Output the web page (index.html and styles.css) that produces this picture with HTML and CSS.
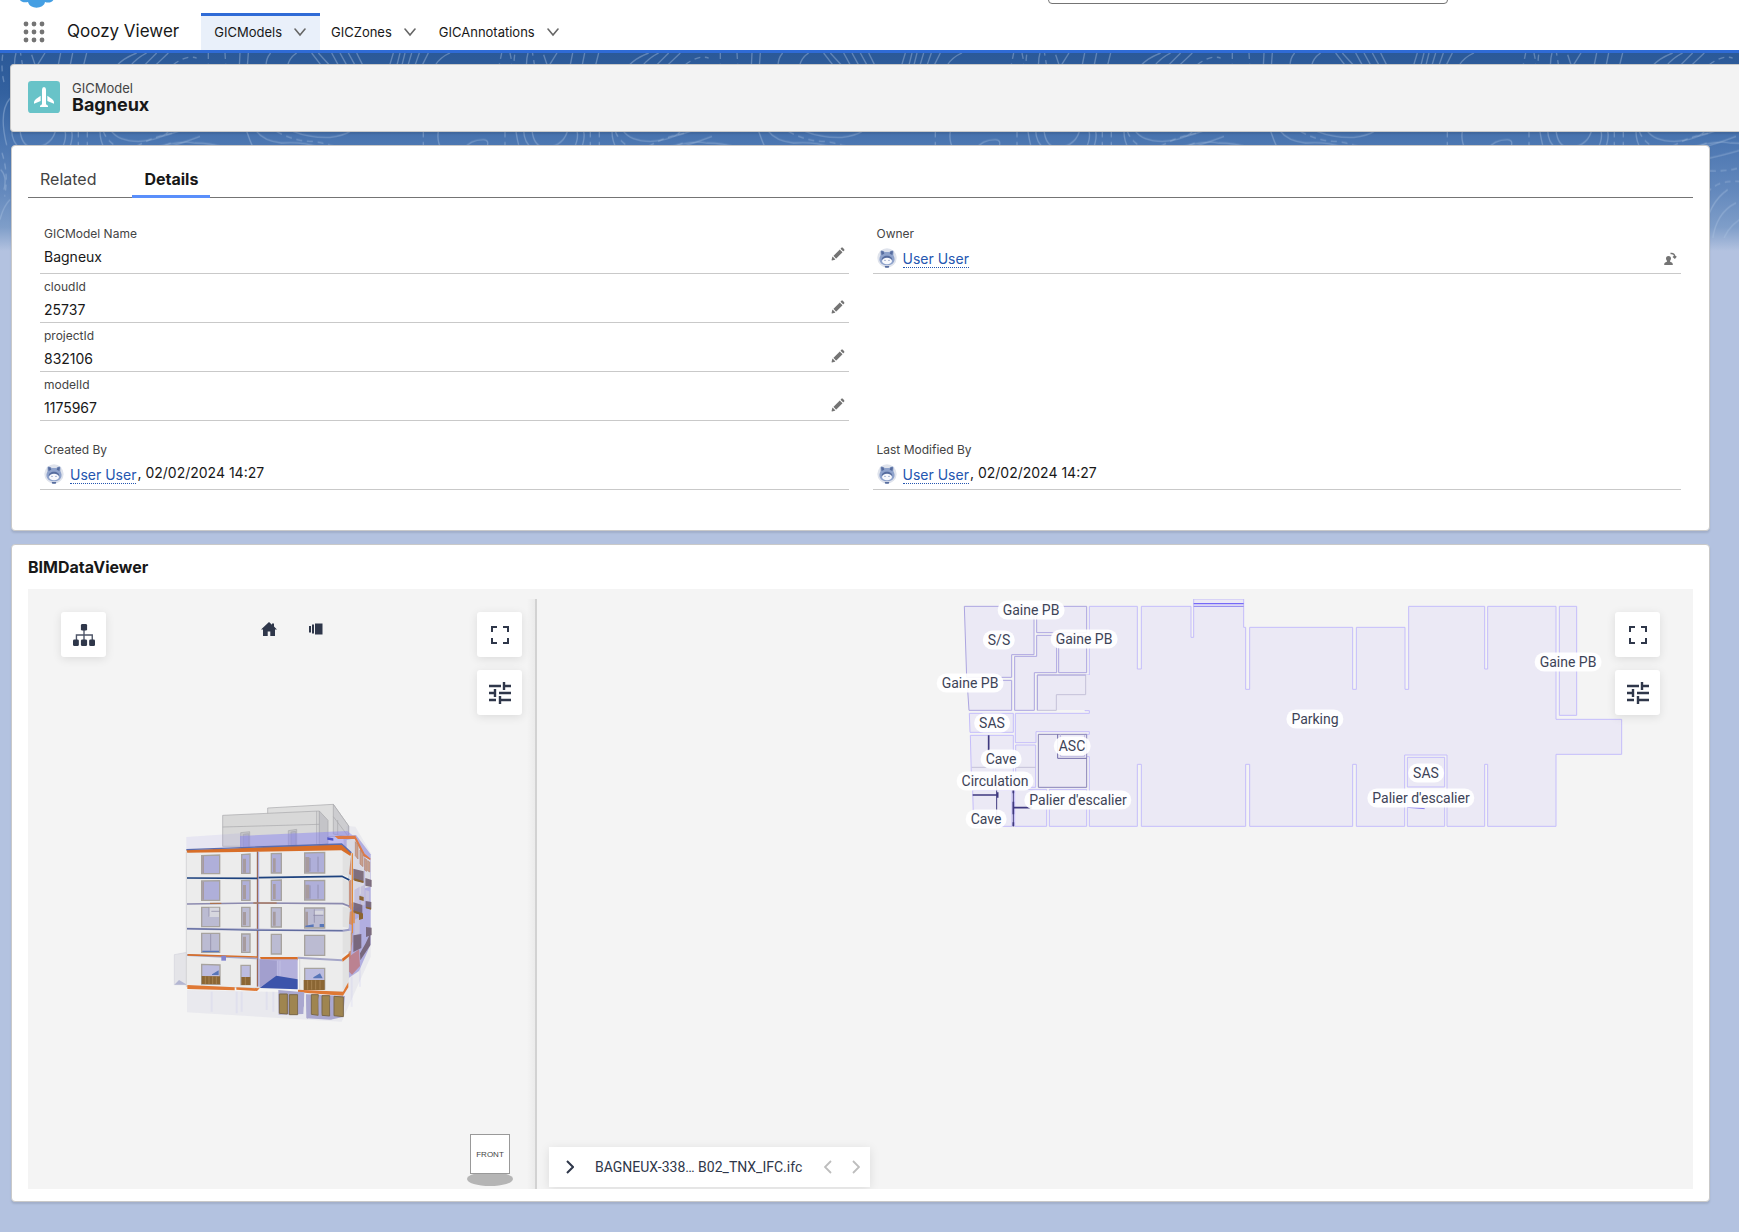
FILE: index.html
```html
<!DOCTYPE html>
<html lang="en">
<head>
<meta charset="utf-8">
<meta name="viewport" content="width=device-width, initial-scale=1">
<title>Bagneux | GICModel</title>
<link rel="stylesheet" href="styles.css">
</head>
<body>
<svg class="sprite" aria-hidden="true">
  <symbol id="edit" viewBox="0 0 52 52"><path fill="currentColor" d="M9.500 33.400l8.900 8.900c.4.4 1 .4 1.400 0L42 20c.4-.4.4-1 0-1.400l-8.800-8.800c-.4-.4-1-.4-1.400 0L9.500 32.100c-.4.4-.4 1 0 1.300zM36.100 5.700c-.4.4-.4 1 0 1.400l8.800 8.800c.4.4 1 .4 1.400 0l2.500-2.500c1.600-1.500 1.600-3.900 0-5.500l-4.700-4.700c-1.600-1.600-4.100-1.600-5.700 0l-2.300 2.500zM2.100 48.200c-.2 1 .7 1.900 1.700 1.700l10.900-2.600c.4-.1.7-.3.9-.5l.2-.2c.2-.2.3-.9-.1-1.300l-9-9c-.4-.4-1.100-.3-1.300-.1l-.2.2c-.3.3-.4.6-.5.9L2.100 48.200z"/></symbol>
  <symbol id="chevron" viewBox="0 0 12 12"><path fill="none" stroke="currentColor" stroke-width="1.600" stroke-linecap="round" d="M1 3l5 6 5-6"/></symbol>
  <symbol id="avatar" viewBox="0 0 60 60">
    <circle cx="30" cy="30" r="29" fill="#dfe3ec"/>
    <path fill="#8ea2cb" d="M11 8c5-2 9 1 12 4h14c3-3 7-6 12-4 1 6 0 10 0 13 4 8 5 14 2 20-4 8-12 11-21 11S13 49 9 41c-3-6-2-12 2-20 0-3-1-8 0-13z"/>
    <path fill="#566c9e" d="M12 10h7l3 7-8 4zM48 10h-7l-3 7 8 4zM14 36c0-8 7-13 16-13s16 5 16 13l-5 3H19z"/>
    <ellipse cx="30" cy="39" rx="15" ry="10" fill="#f7f8fc"/>
    <circle cx="24" cy="37" r="2" fill="#7488b5"/><circle cx="36" cy="37" r="2" fill="#7488b5"/>
    <path fill="#566c9e" d="M23 54h14l-2 5H25z"/>
  </symbol>
  <symbol id="expand" viewBox="0 0 18 18"><path fill="none" stroke="currentColor" stroke-width="2" d="M1 6V1h5M12 1h5v5M17 12v5h-5M6 17H1v-5"/></symbol>
  <symbol id="tune" viewBox="0 0 22 22"><path fill="none" stroke="currentColor" stroke-width="2.400" d="M0 4h12M16 4h6M15 0v8M0 11h6M10 11h12M6 7v8M0 18h7M11 18h11M11 14v8"/></symbol>
</svg>

<header class="app-header">
  <div class="global-bar">
    <svg class="cloud" width="36" height="26" viewBox="0 0 36 26" aria-hidden="true"><path fill="#459fe3" d="M18 0a9 9 0 0 1 9 3 9 9 0 0 1 8 14c-2 4-6 4-9 3-1 7-15 8-17 0-4 1-8 0-9-4V8a8 8 0 0 1 9-5c3-2 5-3 9-3z"/></svg>
    <input class="search" type="text" aria-label="Search">
  </div>
  <nav class="nav">
    <button class="launcher" aria-label="App Launcher">
      <svg width="22" height="22" viewBox="0 0 22 22" fill="#747474"><circle cx="3" cy="3" r="2.400"/><circle cx="11" cy="3" r="2.400"/><circle cx="19" cy="3" r="2.400"/><circle cx="3" cy="11" r="2.400"/><circle cx="11" cy="11" r="2.400"/><circle cx="19" cy="11" r="2.400"/><circle cx="3" cy="19" r="2.400"/><circle cx="11" cy="19" r="2.400"/><circle cx="19" cy="19" r="2.400"/></svg>
    </button>
    <span class="app-name">Qoozy Viewer</span>
    <div class="nav-item active"><a href="#">GICModels</a><button aria-label="GICModels list"><svg><use href="#chevron"/></svg></button></div>
    <div class="nav-item"><a href="#">GICZones</a><button aria-label="GICZones list"><svg><use href="#chevron"/></svg></button></div>
    <div class="nav-item"><a href="#">GICAnnotations</a><button aria-label="GICAnnotations list"><svg><use href="#chevron"/></svg></button></div>
  </nav>
</header>

<div class="stage">
  <svg class="backdrop" aria-hidden="true">
    <defs>
      <linearGradient id="sky" x1="0" y1="0" x2="0" y2="1">
        <stop offset="0" stop-color="#2b5998"/><stop offset=".2" stop-color="#33619f"/><stop offset=".45" stop-color="#4b76b1"/><stop offset=".7" stop-color="#6489bd"/><stop offset=".88" stop-color="#7f9ec9"/><stop offset="1" stop-color="#b3c2e0"/>
      </linearGradient>
      <pattern id="topo" width="1536" height="640" patternUnits="userSpaceOnUse" patternTransform="scale(.33333)">
        <g fill="none" stroke="#a9c0e0" stroke-opacity=".42" stroke-width="4">
          <path d="M48 0q-6 20-4 45M95 5l10 30 28 5M135 0l-25 40M182 0l-8 40M218 0l-8 40M260 0l-10 40M410 0q-40 15-62 40M440 0q-30 15-50 40M470 0l-40 40M505 0l-42 40M720 0l-2 40M745 0l-3 40M812 0q-14 15-14 40M890 0q-22 14-28 40M935 0l28 36M955 0l35 38M995 0l22 40M1020 0l22 40M1045 0l22 40M1070 0l20 40M1180 0l-12 40M1200 0l-10 40M1215 0l-10 40M1235 0l-12 40M1258 0l-14 40M1285 0l-20 40M1350 0q-28 12-44 36"/>
          <path d="M60 -10l8 50M520 35q40-30 70-20M625 0v45M675 0l3 45M8 5q-6 50 6 90M1505 0l-8 40M1530 0l8 40" stroke-dasharray="18 14"/>
          <path d="M30 136q-35 40-10 140M60 230q4 50 40 56 60-10 68-60M35 230q0 40 30 60M195 235q6 20-10 55M215 235q5 20-8 55M300 235q0 30 15 55M335 235q20 28 80 30 70-5 90-30M365 290q40-5 80 0 90-30 140-20 50 0 90 15M740 235q10 30 22 55M770 235q20 28 75 35 60-5 110 12M880 235q50 20 110 18 40-5 60-18M1315 235q-5 30 10 55M1390 290q20-30 60-30 20 0 10 25"/>
          <path d="M235 235v50M262 235v50M310 235q10 30 50 52M410 280q50-30 110-40M830 235q50 30 110 30 60 10 80 25M1270 235v50M1515 235v50" stroke-dasharray="18 14"/>
          <path d="M512 270q-60 20-120 60M1536 285q-60 5-110 35M512 400M2 350q20 20 10 60M30 440q-20 20-30 60M485 250q40-8 110-40M490 285q50-12 110-35M500 320q50-10 120-30M505 540q12-90 70-130M530 560q10-80 70-110M560 570q8-40 50-70"/>
          <path d="M490 350q60 10 120-5M500 450q20-70 110-65M6 300q20 60 8 130" stroke-dasharray="18 14"/>
        </g>
      </pattern>
    </defs>
    <rect width="100%" height="100%" fill="url(#sky)"/>
    <rect width="100%" height="185" fill="url(#topo)"/>
  </svg>

  <section class="record-header">
    <svg class="record-icon" width="32" height="32" viewBox="0 0 96 96" aria-hidden="true"><rect width="96" height="96" rx="10" fill="#68c3c8"/><path fill="#fff" d="M42 26q0-8 6-8t6 8v44l6 4v4H36v-4l6-4zM38 44v16l-20 8v-5q1-5 6-9zM58 44v16l20 8v-5q-1-5-6-9z"/></svg>
    <div>
      <p class="record-type">GICModel</p>
      <h1 class="record-name">Bagneux</h1>
    </div>
  </section>

  <main class="main">
    <section class="card details">
      <div class="tabs" role="tablist">
        <button class="tab" role="tab" aria-selected="false">Related</button>
        <button class="tab selected" role="tab" aria-selected="true">Details</button>
      </div>
      <div class="columns">
        <dl class="column">
          <div class="field tall"><dt>GICModel Name</dt><dd>Bagneux<button class="edit" aria-label="Edit GICModel Name"><svg><use href="#edit"/></svg></button></dd></div>
          <div class="field"><dt>cloudId</dt><dd>25737<button class="edit" aria-label="Edit cloudId"><svg><use href="#edit"/></svg></button></dd></div>
          <div class="field"><dt>projectId</dt><dd>832106<button class="edit" aria-label="Edit projectId"><svg><use href="#edit"/></svg></button></dd></div>
          <div class="field"><dt>modelId</dt><dd>1175967<button class="edit" aria-label="Edit modelId"><svg><use href="#edit"/></svg></button></dd></div>
        </dl>
        <dl class="column">
          <div class="field tall"><dt>Owner</dt><dd><svg class="avatar"><use href="#avatar"/></svg><a class="user" href="#">User User</a><button class="change-owner" aria-label="Change Owner"><svg width="14" height="14" viewBox="0 0 14 14"><path fill="currentColor" d="M5.500 4c1.800 0 2.500 1.200 2.500 2.500 0 .9-.4 1.700-.9 2.200v1c1.900.5 2.700 1.100 2.700 2.800v.500H1.200V12.500c0-1.700.8-2.300 2.700-2.800v-1C3.400 8.200 3 7.400 3 6.500 3 5.200 3.700 4 5.500 4z"/><path fill="none" stroke="currentColor" stroke-width="1.500" d="M7.500 1.500c3-.5 4.300 1 4.300 4M10 4.500L11.800 6l1.400-1.800"/></svg></button></dd></div>
        </dl>
        <dl class="column">
          <div class="field tall"><dt>Created By</dt><dd><svg class="avatar"><use href="#avatar"/></svg><a class="user" href="#">User User</a><span class="stamp">, 02/02/2024 14:27</span></dd></div>
        </dl>
        <dl class="column">
          <div class="field tall"><dt>Last Modified By</dt><dd><svg class="avatar"><use href="#avatar"/></svg><a class="user" href="#">User User</a><span class="stamp">, 02/02/2024 14:27</span></dd></div>
        </dl>
      </div>
    </section>

    <section class="card viewer-card">
      <h2 class="viewer-title">BIMDataViewer</h2>
      <div class="viewer">
        <div class="pane model-pane">
          <div class="toolbar">
            <button class="tool" aria-label="Structure"><svg width="22" height="22" viewBox="0 0 64 64"><path fill="none" stroke="#4d5467" stroke-width="4" d="M32 14v34M10 50V32h46v18"/><g fill="#2f374a"><rect x="23" y="0" width="18" height="19" rx="4"/><rect x="0" y="45" width="17" height="19" rx="4"/><rect x="23" y="45" width="18" height="19" rx="4"/><rect x="47" y="45" width="17" height="19" rx="4"/></g></svg></button>
            <div class="view-actions">
              <button class="bare" aria-label="Home view"><svg width="16" height="14" viewBox="0 0 16 14"><path fill="#2f374a" d="M8 0l3 2.700V1.600h2v2.900L16 7.400h-2V14H9.300V9.500H6.700V14H2V7.400H0z"/></svg></button>
              <button class="bare" aria-label="Projection"><svg width="14" height="12" viewBox="0 0 14 12" fill="#2f374a"><path d="M6 .5h7.500v11H6zM3 1.500h2v9H3zM0 3h2v6.500H0z"/></svg></button>
            </div>
            <div class="tool-stack">
              <button class="tool" aria-label="Full screen"><svg width="18" height="18"><use href="#expand"/></svg></button>
              <button class="tool" aria-label="Settings"><svg width="22" height="22"><use href="#tune"/></svg></button>
            </div>
          </div>
          <svg class="building" width="230" height="240" viewBox="0 0 690 720" role="img" aria-label="3D model">
            <g stroke="#a8a8aa" stroke-width="2">
              <path fill="#dedede" d="M323 54L520 43 566 108V140H323z"/><path fill="#cdcdd0" d="M520 43l46 65v34l-46-10z"/>
              <path fill="#d8d8d8" d="M188 76L478 63v106H188z"/><path fill="#c4c4c8" d="M478 63l26 28v70l-26 6z"/>
              <path fill="none" d="M188 111l290-8M520 80l44 58M533 90v45M470 63v100"/>
              <path fill="#c3c3c9" d="M242 128l27-3v48h-27zM385 122l25-4v50h-25z"/><path fill="#b4b4c6" d="M250 133l16-2v42h-16zM393 126l14-2v42h-14z"/>
            </g>
            <path fill="#8a86e8" fill-opacity=".12" d="M79 141L242 130V172L79 180z"/>
            <path fill="#9c9ac8" fill-opacity=".12" d="M560 108l26 2 46 78V500L545 695 81 667V600L550 610z"/>
            <path fill="#8a86f0" fill-opacity=".5" d="M240 138l322-15 22 18-10 50-30-28-304 10z"/>
            <path fill="#d8d8df" fill-opacity=".6" stroke="#d3d3dc" stroke-width="2" d="M43 494l38-7v97H43z"/><path fill="#b3b6d2" d="M43 584l14-14 24 14z"/>
            <path fill="#b1aee0" d="M550 138l38-3 44 58v270l-35 80-30 20z"/>
            <path fill="#dadae4" d="M560 150l26-5 26 56v92l-30 60-22-40zM614 200l17 10v80l-17 5z"/>
            <path fill="#c6c2dc" d="M583 300l16-10v60l-16 8zM602 290l12-6v60l-12 6zM583 390l16-10v50l-16 8zM616 300l12 4v30h-12z"/>
            <path fill="#de7a45" d="M524 138l62-1 28 54 18 15-2 4-20-12-26-51h-50z"/>
            <g fill="#c98f7c"><path d="M557 190l16-2v68l-13-8zM560 275l14-6v88l-14 8zM565 367l12-4v42l-12-4zM560 490l16-35-4 52-12 3z"/></g>
            <path stroke="#e08a3c" stroke-width="4" d="M577 190v240M582 360v40"/>
            <g fill="#c9a08e" stroke="#b28574" stroke-width="2"><path d="M586 155l8 10v42l-8-10zM600 180l9 12v38l-9-8zM614 205l6 4v35l-6-4zM623 212l6 4v30l-6-4zM562 440l14-12v28l-14 30z"/></g>
            <path fill="#bd7a82" fill-opacity=".85" d="M567 500l30-22 3 50-24 26-10-10z"/>
            <g fill="#6e5c6c" fill-opacity=".85"><path d="M580 236l31 8v34l-31-8zM616 264l19 6v21l-19-4zM580 337l27 8v30l-27-8zM617 333l17 3v22l-17-4zM580 436l24-4v42l-24 12zM618 411l17 2v22l-17 6zM600 490l17-30 14-30v36l-30 45z"/></g>
            <g fill="#8b642f"><path d="M583 265l27 8v6l-27-7zM583 362l22 6v8l-22-7zM598 317l13 4v12l-13-4zM597 372l12-2v16l-12 4zM618 350l15 3v6l-15-4z"/></g>
            <path fill="#4f56c8" d="M502 142l18 3v7l-18-3z"/>
            <path fill="#ececec" stroke="#c9c9cc" stroke-width="2" d="M79 186l213-10 256-8 18 22v370l-14 46-133-3V506H299v88l-220-4z"/>
            <path fill="#e1e1e1" d="M548 175l26 15-8 68-18-4zM548 265l18 12v70l-18-4zM548 350l22 4-4 60-18-4zM548 424l24-2v60l-24 12zM548 512l18-15v80l-18 25z"/>
            <path fill="#d86e28" d="M79 180L292 172 545 163l29 26-3 9-27-17-252 4-210 3z"/>
            <path fill="none" stroke="#5a6caf" stroke-width="4" d="M79 179L292 171 545 162l29 26"/>
            <path stroke="#8c4f36" stroke-width="3" d="M292 185v405"/>
            <path stroke="#a3a5dd" stroke-width="3" d="M296 185v405"/>
            <g fill="none"><path stroke="#1d427e" stroke-width="5" d="M81 264l211 1M296 263l250-4 22 11"/>
            <path stroke="#8c8aaf" stroke-width="5" d="M81 342l211-3 256 2 20 8"/><path stroke="#b06d3a" stroke-width="3" d="M150 340h34M280 339h70"/>
            <path stroke="#9a9cc4" stroke-width="6" d="M81 416l211 3 256 3 20-3"/><path stroke="#40518a" stroke-width="2" d="M81 416l211 5 256 1"/>
            <path stroke="#a5a6c8" stroke-width="6" d="M81 495l211 10M413 503l133 8"/></g>
            <path fill="#d86e28" d="M83 492l210 7v4l-210-6zM300 501h113v10l-110-2zM546 506l23-18v10l-21 17z"/>
            <g fill="#afafd9" stroke="#a7a39e" stroke-width="4">
              <path d="M125 197l54-2v56h-54zM245 194l25-2v58h-25zM334 191l30-1v59h-30zM434 189l60-2v62h-60zM125 273l54-1v59h-54zM245 272l25-1v60h-25zM334 271l30-1v61h-30zM434 272l60-1v59h-60z"/>
              <path fill="#bbbbd2" d="M125 352h54v58h-54zM245 352h25v58h-25zM334 353h30v58h-30zM434 354h60v60h-60zM125 430h54v57h-54zM245 432h25v55h-25zM334 433h30v59h-30zM434 436h60v60h-60z"/>
              <path fill="#bcbcdf" d="M125 523l55 2v58l-55-1zM243 526h28v58h-28zM434 535h60v62h-60z"/>
            </g>
            <g fill="#a79b9e"><path d="M127 199l5-2v52h-5zM249 206h9v42h-9zM339 205h8v42h-8zM436 201h12v45h-12zM249 285h9v42h-9zM339 282h8v45h-8zM436 284h12v42h-12zM249 366h9v40h-9zM339 365h8v42h-8zM249 440h9v44h-9zM436 365h8v45h-8zM127 275h5v54h-5z"/></g>
            <path fill="#5876b8" d="M156 553l20-12v14h-20zM460 562l20-12 8 15h-28zM436 407l25-4v8h-25zM479 402h13v9h-13zM127 482h50v4h-50z"/>
            <path fill="#d7d7df" d="M147 353h30v28h-30zM463 362h27v12h-27z"/><path fill="none" stroke="#8683a0" stroke-width="2" d="M147 353v27M154 364h25M463 358v40M450 204v40M474 200v45M450 286v40M474 284v42M152 432v50M460 376h30"/>
            <path fill="#8284cf" d="M184 497h14v15h-14z"/>
            <path fill="#b4b1dc" d="M299 508h114v60l-114 24z"/><path fill="#a29fce" d="M299 508l53 4v48l-53 32z"/><path fill="none" stroke="#c7c5e8" stroke-width="2" d="M352 512v46M360 512v46"/>
            <path fill="#3c54ab" d="M299 594l50-37 64 11v30z"/>
            <g fill="#8b6634"><path d="M125 558l55 1v24l-55-1zM244 561h27v24h-27zM431 570h63v30h-63z"/></g>
            <path stroke="#b58f5d" stroke-width="2" d="M136 559v23M147 559v23M158 559v23M169 559v23M256 561v24M443 571v28M455 571v28M467 571v28M480 571v28"/>
            <path fill="#df7834" d="M82 585l142 7v9l-142-4zM229 592l70 3-8 8-62-4zM414 599l135 6 16-28v15l-16 25-135-10z"/>
            <path fill="#aaa8cf" d="M355 600l78 7-3 65-74 2zM438 613l117 5-6 63-38 8-72-4z"/>
            <g fill="#9f8550" stroke="#7b6849" stroke-width="3"><path d="M358 612h24v60l-24-2zM388 614h25v60h-25zM454 614h21v62l-21-3zM486 617h23v61l-23-2zM522 619l28 2v59l-28-3z"/></g>
            <path fill="#aaa7cf" d="M415 614l17 14v20l-17 24zM439 612l10 62-8 14zM475 614l9 60-8 12zM509 618l10 58-6 14z"/>
            <g fill="none" stroke="#9591e8" stroke-opacity=".1" stroke-width="6"><path d="M155 605v60M230 605v65M245 605v60M320 605v55M340 605v60M575 560v90M600 530v60"/></g>
          </svg>
          <svg class="nav-cube" width="46" height="54" viewBox="0 0 46 54" role="img" aria-label="Front view"><ellipse cx="23" cy="46" rx="23" ry="7" fill="#b5b5b5"/><rect x="3.500" y="1.500" width="39" height="39" fill="#fff" stroke="#999"/><text x="23" y="24" class="cube-text">FRONT</text></svg>
        </div>
        <div class="divider"></div>
        <div class="pane plan-pane">
          <div class="plan">
            <svg width="710" height="236" viewBox="0 12 2130 708" role="img" aria-label="Floor plan">
              <g fill="#ebe9f5" stroke="#c5bdfa" stroke-width="3">
                <path d="M478 34H622V222H634V34H783V127H791V12H941V97H947V283H959V97H1268V283H1279V97H1425V283H1436V34H1664V222H1673V34H1878V373H2075V478H1878V694H1673V508H1664V694H1551V480H1424V694H1279V508H1268V694H959V508H947V694H634V508H622V694H478V485H465V418H478V410H318V443H256V355H478V347H465V240H478z"/>
                <path d="M1432 487H1544V576H1432zM1432 585H1544V694H1432zM1888 34H1940V361H1888zM118 355H250V412H120zM121 421H250V575H125zM257 450H317V577H257zM128 585H246V694H131zM254 583H350V694H254zM358 583H470V694H358z"/>
              </g>
              <path fill="#ebe9f5" d="M322 240h158v105H322zM462 420h18v62h-18z"/>
              <g fill="#ebe9f5" stroke="#aca5e0" stroke-width="3">
                <path d="M103 34H312V179H245V247H110zM111 256H245V346H117zM254 184H320V121H380V233H313V346H254zM320 34H470V113H320zM386 121H470V233H386z"/>
                <path stroke="#c4c1d8" d="M467 240V299H379V346H322V240z"/><path fill="none" d="M322 346V240H467"/>
                <path stroke="#8984b8" d="M325 418H470V577H325z"/>
              </g>
              <path fill="none" stroke="#6f69a6" stroke-width="3" d="M383 418V490H470"/>
              <path fill="none" stroke="#bdb8e0" stroke-width="3" d="M391 418V484H464V420"/>
              <path stroke="#c4c1d8" stroke-width="3" d="M125 517H317"/>
              <g fill="none" stroke="#3f397f" stroke-width="5"><path d="M128 600H204M203 592V608M250 638H305M176 421V468"/><path stroke-width="3" d="M200 575V694M250 585V694"/><path d="M250 585V595M250 620V658M250 682V694"/></g>
              <path stroke="#8a80ee" stroke-width="3" d="M791 34H941M1432 637L1484 641"/><path stroke="#7669f8" stroke-width="4" d="M791 26H941"/>
            </svg>
            <span class="room" style="left:101px;top:11px">Gaine PB</span>
            <span class="room" style="left:69px;top:41px">S/S</span>
            <span class="room" style="left:154px;top:40px">Gaine PB</span>
            <span class="room" style="left:40px;top:84px">Gaine PB</span>
            <span class="room" style="left:62px;top:124px">SAS</span>
            <span class="room" style="left:142px;top:147px">ASC</span>
            <span class="room" style="left:71px;top:160px">Cave</span>
            <span class="room" style="left:65px;top:182px">Circulation</span>
            <span class="room" style="left:148px;top:201px">Palier d'escalier</span>
            <span class="room" style="left:56px;top:220px">Cave</span>
            <span class="room" style="left:385px;top:120px">Parking</span>
            <span class="room" style="left:496px;top:174px">SAS</span>
            <span class="room" style="left:491px;top:199px">Palier d'escalier</span>
            <span class="room" style="left:638px;top:63px">Gaine PB</span>
          </div>
          <div class="toolbar">
            <div class="tool-stack">
              <button class="tool" aria-label="Full screen"><svg width="18" height="18"><use href="#expand"/></svg></button>
              <button class="tool" aria-label="Settings"><svg width="22" height="22"><use href="#tune"/></svg></button>
            </div>
          </div>
          <div class="file-bar">
            <button class="bare" aria-label="Open list"><svg width="8" height="14" viewBox="0 0 8 14"><path fill="none" stroke="#2f374a" stroke-width="2" d="M1 1l6 6-6 6"/></svg></button>
            <span class="file-name">BAGNEUX-338… B02_TNX_IFC.ifc</span>
            <button class="bare" aria-label="Previous" disabled><svg width="8" height="14" viewBox="0 0 8 14"><path fill="none" stroke="#bdbdbd" stroke-width="1.800" d="M7 1L1 7l6 6"/></svg></button>
            <button class="bare" aria-label="Next" disabled><svg width="8" height="14" viewBox="0 0 8 14"><path fill="none" stroke="#bdbdbd" stroke-width="1.800" d="M1 1l6 6-6 6"/></svg></button>
          </div>
        </div>
      </div>
    </section>
  </main>
</div>
</body>
</html>
```
FILE: styles.css
```css
* { box-sizing: border-box; }
body, h1, h2, p, dl, dd { margin: 0; }
body {
  min-height: 100vh;
  background: #b3c2e0;
  color: #181818;
  font: 13px/20px Inter, "Liberation Sans", sans-serif;
}
button { margin: 0; padding: 0; border: 0; background: none; color: inherit; font: inherit; cursor: pointer; }
a { color: inherit; text-decoration: none; }
svg { display: block; flex: none; }
.sprite { position: absolute; width: 0; height: 0; }

/* Application header */
.app-header { background: #fff; border-bottom: 3px solid #2f6bd6; }
.global-bar { display: flex; justify-content: space-between; height: 13px; padding: 0 291px 0 19px; overflow: hidden; }
.cloud { margin-top: -18px; }
.search { width: 400px; height: 34px; margin-top: -30px; border: 1px solid #747474; border-radius: 4px; background: #fff; }
.nav { display: flex; align-items: stretch; height: 37px; padding-left: 23px; }
.launcher { display: flex; align-items: center; }
.app-name { margin: 0 22px; font-size: 17px; line-height: 36px; }
.nav-item { display: flex; align-items: center; gap: 12px; padding: 0 12px 0 11px; line-height: 36px; }
.nav-item.active { padding: 0 14px 0 13px; background: #e9f0fa; box-shadow: inset 0 3px #2f6bd6; }
.nav-item svg { width: 12px; height: 12px; color: #666; }

/* Page area */
.stage { position: relative; padding-top: 11px; }
.backdrop { position: absolute; top: 0; left: 0; width: 100%; height: 198px; }
.record-header {
  position: relative;
  display: flex;
  align-items: flex-start;
  gap: 12px;
  height: 68px;
  margin-left: 10px;
  padding: 16px 17px;
  border: 1px solid #c9c9c9;
  border-right: 0;
  border-radius: 4px 0 0 4px;
  background: #f3f3f3;
  box-shadow: 0 2px 2px rgba(0, 0, 0, .1);
}
.record-type { color: #444; line-height: 14px; }
.record-name { font-size: 18px; font-weight: 700; line-height: 20px; }
.main { position: relative; display: grid; gap: 13px; padding: 13px 29px 30px 11px; }
.card { padding: 0 16px; border: 1px solid #c9c9c9; border-radius: 4px; background: #fff; box-shadow: 0 2px 2px rgba(0, 0, 0, .1); }

/* Record details */
.details { padding-top: 14px; padding-bottom: 40px; }
.tabs { display: flex; gap: 24px; border-bottom: 1px solid #747474; }
.tab { height: 38px; margin-bottom: -1px; padding: 0 12px; color: #444; font-size: 16px; }
.tab.selected { color: #181818; font-weight: 700; box-shadow: inset 0 -3px #5a8ffb; }
.columns { display: grid; grid-template-columns: 1fr 1fr; gap: 16px 24px; padding: 23px 12px 0; }
.field { height: 49px; padding: 3px 4px 0; border-bottom: 1px solid #c9c9c9; }
.field.tall { height: 53px; }
.field dt { color: #444; font-size: 12px; }
.field dd { display: flex; align-items: center; height: 25px; font-size: 14px; }
.edit { margin-left: auto; }
.edit svg { width: 14px; height: 14px; margin-bottom: 5px; color: #747474; }
.change-owner { margin: 4px 0 0 auto; color: #747474; }
.avatar { width: 20px; height: 20px; margin: 2px 6px 0 0; }
.user { color: #2456b0; line-height: 17px; border-bottom: 1px dotted #2456b0; margin-top: 5px; }
.stamp { margin-left: 1px; }

/* BIM viewer */
.viewer-card { padding-bottom: 12px; }
.viewer-title { font-size: 16px; font-weight: 700; line-height: 44px; }
.viewer { display: grid; grid-template-columns: minmax(0, 507fr) 2px minmax(0, 1156fr); height: 600px; padding-top: 10px; background: #f4f4f4; }
.pane { position: relative; overflow: hidden; }
.model-pane { background: linear-gradient(to left, #ebebeb, #f4f4f4 8px); }
.divider { background: #d2d2d2; }
.toolbar { position: relative; display: flex; justify-content: space-between; align-items: flex-start; padding: 13px 13px 0 33px; }
.plan-pane .toolbar { justify-content: flex-end; padding-right: 33px; }
.tool-stack { display: grid; gap: 13px; }
.tool { display: grid; place-items: center; width: 45px; height: 45px; border-radius: 3px; background: #fff; color: #2f374a; box-shadow: 0 2px 10px rgba(0, 0, 0, .1); }
.view-actions { display: flex; align-items: center; gap: 32px; height: 33px; }
.building { position: absolute; top: 191px; left: 132px; }
.nav-cube { position: absolute; right: 22px; bottom: 2px; }
.cube-text { font: 8px "Liberation Sans", sans-serif; text-anchor: middle; fill: #444; }
.plan { position: absolute; top: 0; right: 53px; width: 710px; height: 236px; }
.room {
  position: absolute;
  transform: translate(-50%, -50%);
  padding: 0 5px;
  border-radius: 10px;
  background: rgba(255, 255, 255, .92);
  color: #3d4357;
  font: 14px/19px Roboto, "Liberation Sans", sans-serif;
  white-space: nowrap;
}
.file-bar {
  position: absolute;
  left: 12px;
  bottom: 2px;
  display: flex;
  align-items: center;
  height: 40px;
  padding: 0 10px 0 17px;
  background: #fff;
  box-shadow: 0 2px 10px rgba(0, 0, 0, .1);
}
.file-name { margin: 0 22px 0 21px; color: #2f374a; font: 14px/20px Roboto, "Liberation Sans", sans-serif; }
.file-bar .bare + .bare { margin-left: 20px; }
```
